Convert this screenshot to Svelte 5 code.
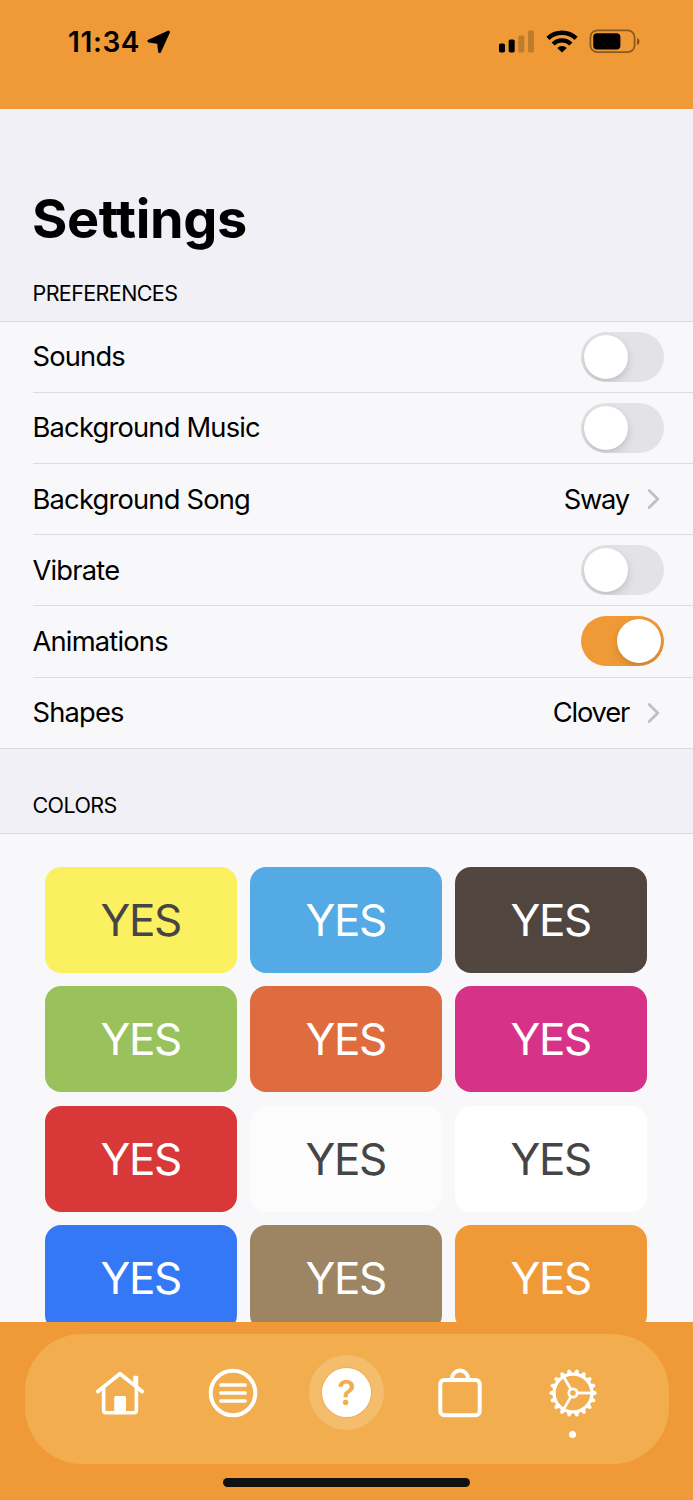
<script>
  let preferences = $state([
    { label: 'Sounds', type: 'toggle', on: false },
    { label: 'Background Music', type: 'toggle', on: false },
    { label: 'Background Song', type: 'link', value: 'Sway' },
    { label: 'Vibrate', type: 'toggle', on: false },
    { label: 'Animations', type: 'toggle', on: true },
    { label: 'Shapes', type: 'link', value: 'Clover' }
  ]);

  const colors = [
    { name: 'yellow', bg: '#fbf05f', dark: true },
    { name: 'sky', bg: '#53aae5' },
    { name: 'brown', bg: '#50463f' },
    { name: 'green', bg: '#99c25c' },
    { name: 'coral', bg: '#df6c3f' },
    { name: 'pink', bg: '#d63388' },
    { name: 'red', bg: '#d83838' },
    { name: 'snow', bg: '#fcfcfc', dark: true },
    { name: 'white', bg: '#ffffff', dark: true },
    { name: 'blue', bg: '#3478f6' },
    { name: 'tan', bg: '#9d8563' },
    { name: 'orange', bg: '#f09a37' }
  ];

  const teeth = Array.from({ length: 18 }, (_, i) => i * 20);
</script>

<div class="screen">
  <header class="status-bar">
    <div class="clock">
      <span class="time">11:34</span>
      <svg width="24" height="24" viewBox="0 0 24 24">
        <path d="M21.4 2.2 L1.9 11 L11.6 12.4 L12.6 21.6 Z" stroke="#000" stroke-width="3" stroke-linejoin="round" />
      </svg>
    </div>
    <div class="indicators">
      <svg width="36" height="24" viewBox="0 0 36 24">
        <rect x="0" y="13.6" width="6" height="8.8" rx="1.6" />
        <rect x="9.7" y="9.6" width="6" height="12.8" rx="1.6" />
        <rect x="19.3" y="5.4" width="6" height="17" rx="1.6" opacity="0.2" />
        <rect x="29" y="0.4" width="6" height="22" rx="1.6" opacity="0.2" />
      </svg>
      <svg class="wifi" width="32" height="24" viewBox="0 0 32 24" fill="none" stroke="#000" stroke-width="4.4">
        <path d="M1.9 8.4 A20.3 20.3 0 0 1 30.1 8.4" />
        <path d="M7.1 14 A12.7 12.7 0 0 1 24.9 14" />
        <path d="M11.2 18 A6.8 6.8 0 0 1 20.8 18 L16 22.6 Z" fill="#000" stroke="none" />
      </svg>
      <svg class="battery" width="52" height="26" viewBox="0 0 52 26">
        <rect x="1.4" y="1.4" width="44.2" height="21.8" rx="7" fill="none" stroke="#000" stroke-width="1.8" opacity="0.42" />
        <rect x="4.2" y="4.2" width="27.2" height="16.4" rx="4" />
        <path d="M48 8.9 Q50.6 10 50.6 12.5 T48 16.1 Z" opacity="0.45" />
      </svg>
    </div>
  </header>

  <main class="content">
    <h1>Settings</h1>

    <h2>PREFERENCES</h2>
    <div class="list">
      {#each preferences as item}
        <div class="row">
          <span class="label">{item.label}</span>
          {#if item.type === 'toggle'}
            <button
              class="toggle"
              class:on={item.on}
              aria-label={item.label}
              onclick={() => (item.on = !item.on)}
            >
              <span class="knob"></span>
            </button>
          {:else}
            <span class="value">{item.value}</span>
            <svg class="chevron" width="14" height="22" viewBox="0 0 14 22">
              <path d="M2.2 2.6 L10.8 11 L2.2 19.4" fill="none" stroke="#c0c0c3" stroke-width="2.8" stroke-linecap="round" stroke-linejoin="round" />
            </svg>
          {/if}
        </div>
      {/each}
    </div>

    <h2 class="colors-title">COLORS</h2>
    <div class="palette">
      {#each colors as color (color.name)}
        <button class="swatch" class:dark={color.dark} style="background: {color.bg}">YES</button>
      {/each}
    </div>
  </main>

  <footer class="tab-bar">
    <nav>
      <button class="tab" aria-label="Home">
        <svg width="50" height="50" viewBox="-25 -25 50 50" fill="none" stroke="#fff" stroke-width="3.8" stroke-linecap="round" stroke-linejoin="round">
          <path d="M-22.2 -1.4 L0 -19.2 L22.2 -1.4" />
          <path d="M-16.4 -5 V17 Q-16.4 19.8 -13.6 19.8 H13.6 Q16.4 19.8 16.4 17 V-5" stroke-width="3.6" stroke-linecap="butt" />
          <path d="M-5.8 20 V4.6 Q-5.8 3 -4.2 3 H4.4 Q6 3 6 4.6 V20 Z" fill="#fff" stroke="none" />
          <path d="M13.2 -8 V-16 Q13.2 -17.2 14.4 -17.2 H17 Q18.2 -17.2 18.2 -16 V-4 Z" fill="#fff" stroke="none" />
        </svg>
      </button>
      <button class="tab" aria-label="List">
        <svg width="50" height="50" viewBox="-25 -25 50 50" fill="none" stroke="#fff" stroke-linecap="round">
          <circle r="22.3" stroke-width="4" />
          <path d="M-12.2 -8 H12.2 M-12.2 0 H12.2 M-12.2 8 H12.2" stroke-width="3.5" />
        </svg>
      </button>
      <button class="tab" aria-label="Help">
        <span class="halo"><span class="help">?</span></span>
      </button>
      <button class="tab" aria-label="Shop">
        <svg width="50" height="50" viewBox="-25 -25 50 50" fill="none" stroke="#fff" stroke-width="4">
          <rect x="-19.7" y="-13" width="39.4" height="35.2" rx="4" />
          <path d="M-8 -13 V-14.4 A8 8 0 0 1 8 -14.4 V-13" />
        </svg>
      </button>
      <button class="tab active" aria-label="Settings">
        <svg width="50" height="50" viewBox="-25 -25 50 50" fill="none" stroke="#fff">
          <circle r="18.9" stroke-width="3.2" />
          {#each teeth as angle}
            <path d="M19.4 -2.7 L23 -1.5 Q24.6 0 23 1.5 L19.4 2.7 Z" fill="#fff" stroke="none" transform="rotate({angle})" />
          {/each}
          <circle r="4.2" stroke-width="2.8" />
          {#each [0, 120, 240] as angle}
            <path d="M5 0 H19" stroke-width="2.8" transform="rotate({angle})" />
          {/each}
        </svg>
        <span class="dot"></span>
      </button>
    </nav>
    <div class="home-indicator"></div>
  </footer>
</div>

<style>
  :global(body) {
    margin: 0;
  }

  .screen {
    display: flex;
    flex-direction: column;
    width: 693px;
    height: 1500px;
    overflow: hidden;
    background: #f1f0f6;
    color: #000;
    font-family: Inter, 'Liberation Sans', sans-serif;
  }

  button {
    padding: 0;
    border: none;
    background: none;
    font-family: inherit;
  }

  svg {
    display: block;
    flex: none;
  }

  .status-bar {
    flex: none;
    display: flex;
    justify-content: space-between;
    align-items: flex-start;
    box-sizing: border-box;
    height: 108.6px;
    padding: 29px 52px 0 68px;
    background: #f09a37;
  }

  .clock {
    display: flex;
    align-items: center;
    gap: 7px;
    height: 25px;
  }

  .time {
    font-size: 28px;
    font-weight: 600;
    letter-spacing: 0.6px;
  }

  .indicators {
    display: flex;
    align-items: center;
    height: 25px;
  }

  .wifi {
    margin-left: 11px;
  }

  .battery {
    margin-left: 11px;
  }

  .content {
    flex: 1;
    min-height: 0;
    overflow: hidden;
  }

  h1 {
    margin: 77px 0 0 32px;
    font-size: 54px;
    line-height: 66px;
    font-weight: 700;
    letter-spacing: -0.35px;
  }

  h2 {
    margin: 29px 0 16px 32.5px;
    font-size: 21.5px;
    line-height: 24px;
    font-weight: 400;
    letter-spacing: -0.6px;
  }

  .list {
    border-top: 1px solid #dcdcdf;
    border-bottom: 1px solid #dcdcdf;
    background: #f8f8fa;
  }

  .row {
    display: flex;
    align-items: center;
    box-sizing: border-box;
    height: 71.2px;
    margin-left: 32.5px;
    padding-right: 29.5px;
    border-bottom: 1px solid #dcdcdf;
    font-size: 27.3px;
    letter-spacing: -0.8px;
  }

  .row:last-child {
    height: 70.2px;
    border-bottom: none;
  }

  .label {
    flex: 1;
  }

  .value {
    letter-spacing: -1.2px;
  }

  .toggle {
    display: flex;
    align-items: center;
    box-sizing: border-box;
    width: 82.5px;
    height: 50px;
    padding: 0 3px;
    border-radius: 25px;
    background: #e3e2e7;
    overflow: hidden;
  }

  .toggle.on {
    justify-content: flex-end;
    background: #f09a37;
  }

  .knob {
    width: 44px;
    height: 44px;
    border-radius: 50%;
    background: #fff;
    box-shadow: 0 4px 10px rgba(0, 0, 0, 0.14), 0 1px 2px rgba(0, 0, 0, 0.06);
  }

  .chevron {
    margin: 0 3px 0 17.5px;
  }

  .colors-title {
    margin-top: 44px;
  }

  .palette {
    display: grid;
    grid-template-columns: repeat(3, 192px);
    grid-auto-rows: 106px;
    gap: 13.3px 13px;
    padding: 33.3px 45.4px 0;
    border-top: 1px solid #dcdcdf;
    background: #f8f8fa;
  }

  .swatch {
    border-radius: 16px;
    color: #fff;
    font-size: 44px;
    letter-spacing: -1.3px;
    text-indent: -1.3px;
  }

  .swatch.dark {
    color: #454545;
  }

  .tab-bar {
    flex: none;
    display: flex;
    flex-direction: column;
    align-items: center;
    box-sizing: border-box;
    height: 178.4px;
    padding-top: 12.8px;
    background: #f09a37;
  }

  nav {
    display: flex;
    justify-content: center;
    box-sizing: border-box;
    width: 644px;
    height: 129.7px;
    border-radius: 57px;
    background: #f2ad4e;
  }

  .tab {
    position: relative;
    display: flex;
    align-items: center;
    justify-content: center;
    width: 113.2px;
    height: 117px;
  }

  .halo {
    display: flex;
    align-items: center;
    justify-content: center;
    width: 75px;
    height: 75px;
    border-radius: 50%;
    background: #f4bd6b;
  }

  .help {
    width: 49px;
    height: 49px;
    border-radius: 50%;
    background: #fff;
    box-shadow: 0 0 0 1px #f2ad4e;
    color: #f2ad4e;
    font-size: 34px;
    line-height: 50px;
    font-weight: 600;
    text-align: center;
  }

  .dot {
    position: absolute;
    left: 50%;
    top: 97px;
    width: 7px;
    height: 7px;
    margin-left: -3.5px;
    border-radius: 50%;
    background: #fff;
  }

  .home-indicator {
    width: 247.5px;
    height: 8.5px;
    margin-top: 14.2px;
    border-radius: 5px;
    background: #111;
  }
</style>
